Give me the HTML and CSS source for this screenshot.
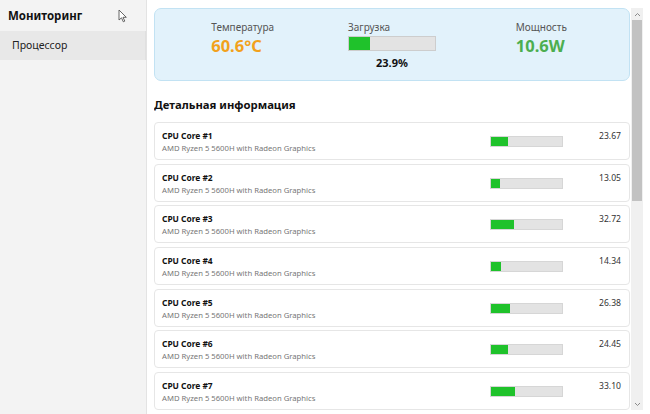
FILE: index.html
```html
<!DOCTYPE html>
<html lang="ru">
<head>
<meta charset="utf-8">
<title>Мониторинг</title>
<link rel="stylesheet" href="styles.css">
</head>
<body>
<div class="app">
  <aside class="sidebar">
    <div class="brand">
      <span class="brand-title">Мониторинг</span>
      <svg class="cursor" width="10" height="14" viewBox="0 0 10 14"><path d="M1 1 L1 11 L3.5 8.8 L5.3 12.8 L6.8 12.1 L5 8.3 L8.3 8.3 Z" fill="#fff" stroke="#555" stroke-width="0.9" stroke-linejoin="round"/></svg>
    </div>
    <nav class="nav">
      <div class="nav-item active">Процессор</div>
    </nav>
  </aside>
  <main class="main">
    <div class="content">
      <section class="summary">
        <div class="stat">
          <div class="stat-inner">
            <div class="stat-label">Температура</div>
            <div class="stat-value temp">60.6°C</div>
          </div>
        </div>
        <div class="stat">
          <div class="stat-inner">
            <div class="stat-label">Загрузка</div>
            <div class="load-bar"><div class="load-fill" style="width:23.9%"></div></div>
            <div class="load-text">23.9%</div>
          </div>
        </div>
        <div class="stat">
          <div class="stat-inner">
            <div class="stat-label">Мощность</div>
            <div class="stat-value power">10.6W</div>
          </div>
        </div>
      </section>
      <h2 class="section-title">Детальная информация</h2>
      <div class="cores">
        <div class="core">
          <div class="core-info"><div class="core-name">CPU Core #1</div><div class="core-model">AMD Ryzen 5 5600H with Radeon Graphics</div></div>
          <div class="core-bar"><div class="core-fill" style="width:23.67%"></div></div>
          <div class="core-value">23.67</div>
        </div>
        <div class="core">
          <div class="core-info"><div class="core-name">CPU Core #2</div><div class="core-model">AMD Ryzen 5 5600H with Radeon Graphics</div></div>
          <div class="core-bar"><div class="core-fill" style="width:13.05%"></div></div>
          <div class="core-value">13.05</div>
        </div>
        <div class="core">
          <div class="core-info"><div class="core-name">CPU Core #3</div><div class="core-model">AMD Ryzen 5 5600H with Radeon Graphics</div></div>
          <div class="core-bar"><div class="core-fill" style="width:32.72%"></div></div>
          <div class="core-value">32.72</div>
        </div>
        <div class="core">
          <div class="core-info"><div class="core-name">CPU Core #4</div><div class="core-model">AMD Ryzen 5 5600H with Radeon Graphics</div></div>
          <div class="core-bar"><div class="core-fill" style="width:14.34%"></div></div>
          <div class="core-value">14.34</div>
        </div>
        <div class="core">
          <div class="core-info"><div class="core-name">CPU Core #5</div><div class="core-model">AMD Ryzen 5 5600H with Radeon Graphics</div></div>
          <div class="core-bar"><div class="core-fill" style="width:26.38%"></div></div>
          <div class="core-value">26.38</div>
        </div>
        <div class="core">
          <div class="core-info"><div class="core-name">CPU Core #6</div><div class="core-model">AMD Ryzen 5 5600H with Radeon Graphics</div></div>
          <div class="core-bar"><div class="core-fill" style="width:24.45%"></div></div>
          <div class="core-value">24.45</div>
        </div>
        <div class="core">
          <div class="core-info"><div class="core-name">CPU Core #7</div><div class="core-model">AMD Ryzen 5 5600H with Radeon Graphics</div></div>
          <div class="core-bar"><div class="core-fill" style="width:33.10%"></div></div>
          <div class="core-value">33.10</div>
        </div>
      </div>
    </div>
    <div class="scrollbar">
      <div class="sb-btn"><svg width="7" height="5" viewBox="0 0 7 5"><path d="M1 4 L3.5 1.5 L6 4" fill="none" stroke="#8a8a8a" stroke-width="1"/></svg></div>
      <div class="sb-track"><div class="sb-thumb"></div></div>
      <div class="sb-btn"><svg width="7" height="5" viewBox="0 0 7 5"><path d="M1 1 L3.5 3.5 L6 1" fill="none" stroke="#8a8a8a" stroke-width="1"/></svg></div>
    </div>
  </main>
</div>
</body>
</html>
```
FILE: styles.css
```css
html, body {
  margin: 0;
  padding: 0;
  background: #ffffff;
}
body {
  font-family: "Noto Sans", "Open Sans", sans-serif;
  color: #1a1a1a;
  width: 650px;
  height: 414px;
  overflow: hidden;
}
.app {
  display: flex;
  height: 414px;
}
.sidebar {
  width: 146px;
  flex: 0 0 146px;
  background: #f3f3f3;
  border-right: 1px solid #e3e3e3;
}
.brand {
  display: flex;
  align-items: flex-start;
  justify-content: space-between;
  padding: 7px 18px 0 8px;
  height: 24px;
}
.brand-title {
  font-size: 11.5px;
  font-weight: 700;
  line-height: 18px;
  color: #111;
}
.cursor {
  margin-top: 2px;
}
.nav-item {
  height: 29px;
  line-height: 29px;
  padding-left: 12px;
  font-size: 10.5px;
  color: #222;
}
.nav-item.active {
  background: #e8e8e8;
  border-right: 1px solid #e0e0e0;
}
.main {
  flex: 1;
  display: flex;
  padding: 8px 7px 4px 7px;
  gap: 1px;
  min-width: 0;
}
.content {
  flex: 1;
  min-width: 0;
  overflow: hidden;
}
.summary {
  display: grid;
  grid-template-columns: 1fr 1fr 1fr;
  height: 73px;
  box-sizing: border-box;
  padding: 11px 13px 0 13px;
  background: #e2f2fb;
  border: 1px solid #c2e2f3;
  border-radius: 7px;
}
.stat {
  display: flex;
  justify-content: center;
}
.stat-label {
  font-size: 10px;
  line-height: 14px;
  color: #555;
}
.stat-value {
  font-size: 16.5px;
  font-weight: 700;
  line-height: 24px;
}
.temp { color: #f2a11c; }
.power { color: #4cae4f; }
.load-bar {
  width: 88px;
  height: 15px;
  margin-top: 2px;
  box-sizing: border-box;
  background: #e3e3e3;
  border: 1px solid #cdcdcd;
}
.load-fill {
  height: 100%;
  background: #1fc22b;
}
.load-text {
  text-align: center;
  font-size: 11px;
  font-weight: 700;
  line-height: 14px;
  margin-top: 5px;
  color: #111;
}
.section-title {
  margin: 15px 0 0 0;
  font-size: 11.3px;
  font-weight: 700;
  line-height: 18px;
  color: #111;
}
.cores {
  display: flex;
  flex-direction: column;
  gap: 3.67px;
  margin-top: 8px;
}
.core {
  display: flex;
  align-items: flex-start;
  flex: 0 0 38px;
  height: 38px;
  box-sizing: border-box;
  padding: 7px 8px 0 7px;
  border: 1px solid #e6e6e6;
  border-radius: 4px;
  background: #fff;
}
.core-info {
  flex: 1;
}
.core-name {
  font-size: 8.4px;
  font-weight: 700;
  line-height: 12px;
  color: #111;
}
.core-model {
  font-size: 7.7px;
  line-height: 12px;
  color: #777;
}
.core-bar {
  width: 73px;
  height: 11px;
  margin-top: 6px;
  box-sizing: border-box;
  background: #e3e3e3;
  border: 1px solid #d6d6d6;
}
.core-fill {
  height: 100%;
  background: #1fc22b;
}
.core-value {
  width: 58px;
  text-align: right;
  font-size: 8.6px;
  line-height: 12px;
  color: #333;
}
.scrollbar {
  width: 12px;
  flex: 0 0 12px;
  display: flex;
  flex-direction: column;
  background: #f0f0f0;
}
.sb-btn {
  height: 12px;
  display: flex;
  align-items: center;
  justify-content: center;
}
.sb-track {
  flex: 1;
}
.sb-thumb {
  height: 181px;
  margin: 0 1px;
  background: #c2c2c2;
}
```
